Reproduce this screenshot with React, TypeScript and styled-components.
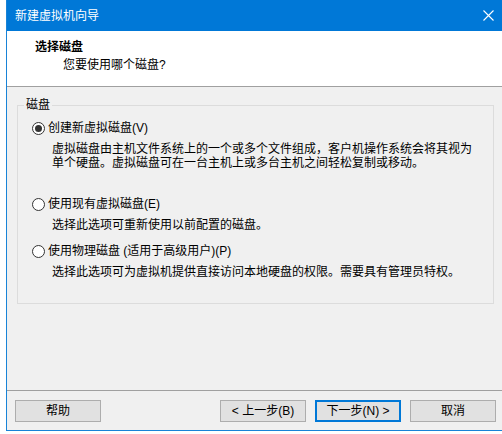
import styled, { createGlobalStyle } from "styled-components"

const GlobalStyle = createGlobalStyle`
    html, body {
        margin: 0;
        padding: 0;
        background: #ffffff;
        overflow: hidden;
    }
    body {
        font-family: "Liberation Sans", "Noto Sans CJK SC", sans-serif;
        font-size: 12px;
        color: #000;
    }
`

const Window = styled.div`
    box-sizing: border-box;
    margin-left: 6px;
    width: 496px;
    border-left: 1px solid #1883d7;
    border-bottom: 1px solid #1883d7;
    background: #f0f0f0;
    display: flex;
    flex-direction: column;
`

const TitleBar = styled.div`
    height: 31px;
    background: #0078d7;
    color: #fff;
    display: flex;
    align-items: center;
    justify-content: space-between;
    padding: 0 8px 0 8px;
    line-height: 16px;
`

const TitleText = styled.span`
    font-size: 12px;
`

const Header = styled.div`
    height: 56px;
    box-sizing: border-box;
    background: #fff;
    border-bottom: 1px solid #a0a0a0;
    padding: 8px 0 0 28px;
    line-height: 16px;
`

const HeaderTitle = styled.div`
    font-weight: bold;
`

const HeaderSub = styled.div`
    margin-top: 2px;
    padding-left: 28px;
`

const Body = styled.div`
    height: 304px;
    box-sizing: border-box;
    padding: 10px 0 0 10px;
    border-bottom: 1px solid #a0a0a0;
`

const Group = styled.fieldset`
    box-sizing: border-box;
    width: 477px;
    height: 207px;
    margin: 0;
    padding: 0;
    border: 1px solid #dcdcdc;
`

const Legend = styled.legend`
    margin-left: 6px;
    padding: 0 2px;
    line-height: 16px;
`

const Options = styled.div`
    padding-left: 14px;
`

const Option = styled.div<{ $top: number }>`
    margin-top: ${p => p.$top}px;
    display: flex;
    align-items: center;
    gap: 3px;
    height: 16px;
    line-height: 16px;
`

const Radio = styled.span<{ $checked?: boolean }>`
    box-sizing: border-box;
    width: 13px;
    height: 13px;
    border-radius: 50%;
    border: 1px solid #333;
    background: #fff;
    display: flex;
    align-items: center;
    justify-content: center;

    &::after {
        content: "";
        width: 7px;
        height: 7px;
        border-radius: 50%;
        background: ${p => (p.$checked ? "#333" : "transparent")};
    }
`

const Desc = styled.div<{ $top: number }>`
    margin-top: ${p => p.$top}px;
    padding-left: 20px;
    line-height: 14px;
`

const Footer = styled.div`
    height: 39px;
    box-sizing: border-box;
    padding: 9px 6px 0 8px;
    display: flex;
    align-items: flex-start;
`

const Spacer = styled.div`
    flex: 1;
`

const ButtonGroup = styled.div`
    display: flex;
    gap: 9px;
`

const Button = styled.button<{ $primary?: boolean }>`
    box-sizing: border-box;
    width: 86px;
    height: 22px;
    margin: 0;
    padding: 0;
    font-family: inherit;
    font-size: 12px;
    color: #000;
    background: #e1e1e1;
    border: ${p => (p.$primary ? "2px solid #0078d7" : "1px solid #adadad")};
    line-height: 16px;
`

const CloseIcon = () => (
    <svg width="11" height="11" viewBox="0 0 11 11">
        <path d="M0.5 0.5 L10.5 10.5 M10.5 0.5 L0.5 10.5" stroke="#fff" strokeWidth="1.1" fill="none" />
    </svg>
)

const App = () => {
    return (
        <>
            <GlobalStyle />
            <Window>
                <TitleBar>
                    <TitleText>新建虚拟机向导</TitleText>
                    <CloseIcon />
                </TitleBar>
                <Header>
                    <HeaderTitle>选择磁盘</HeaderTitle>
                    <HeaderSub>您要使用哪个磁盘?</HeaderSub>
                </Header>
                <Body>
                    <Group>
                        <Legend>磁盘</Legend>
                        <Options>
                            <Option $top={7}>
                                <Radio $checked />
                                <span>创建新虚拟磁盘(V)</span>
                            </Option>
                            <Desc $top={6}>
                                虚拟磁盘由主机文件系统上的一个或多个文件组成，客户机操作系统会将其视为<br />
                                单个硬盘。虚拟磁盘可在一台主机上或多台主机之间轻松复制或移动。
                            </Desc>
                            <Option $top={26}>
                                <Radio />
                                <span>使用现有虚拟磁盘(E)</span>
                            </Option>
                            <Desc $top={6}>选择此选项可重新使用以前配置的磁盘。</Desc>
                            <Option $top={11}>
                                <Radio />
                                <span>使用物理磁盘 (适用于高级用户)(P)</span>
                            </Option>
                            <Desc $top={6}>选择此选项可为虚拟机提供直接访问本地硬盘的权限。需要具有管理员特权。</Desc>
                        </Options>
                    </Group>
                </Body>
                <Footer>
                    <Button>帮助</Button>
                    <Spacer />
                    <ButtonGroup>
                        <Button>&lt; 上一步(B)</Button>
                        <Button $primary>下一步(N) &gt;</Button>
                        <Button>取消</Button>
                    </ButtonGroup>
                </Footer>
            </Window>
        </>
    )
}

export default App
